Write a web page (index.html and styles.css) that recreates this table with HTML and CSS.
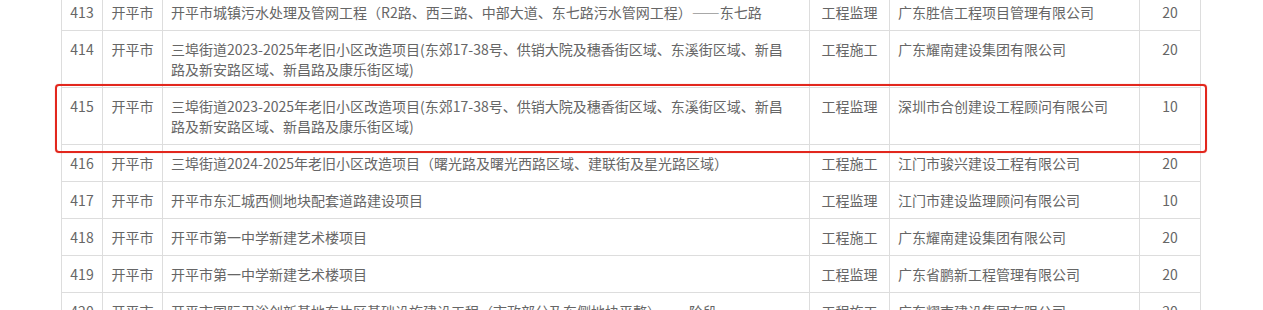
FILE: index.html
```html
<!DOCTYPE html>
<html lang="zh-CN">
<head>
<meta charset="utf-8">
<title>项目列表</title>
<link rel="stylesheet" href="styles.css">
</head>
<body>
<div class="wrap">
  <table class="list">
    <colgroup>
      <col class="c-no"><col class="c-area"><col class="c-name"><col class="c-type"><col class="c-corp"><col class="c-score">
    </colgroup>
    <tbody>
      <tr><td class="ctr">413</td><td class="ctr">开平市</td><td class="name">开平市城镇污水处理及管网工程（R2路、西三路、中部大道、东七路污水管网工程）——东七路</td><td class="ctr">工程监理</td><td>广东胜信工程项目管理有限公司</td><td class="ctr">20</td></tr>
      <tr><td class="ctr">414</td><td class="ctr">开平市</td><td class="name">三埠街道2023-2025年老旧小区改造项目(东郊17-38号、供销大院及穗香街区域、东溪街区域、新昌路及新安路区域、新昌路及康乐街区域)</td><td class="ctr">工程施工</td><td>广东耀南建设集团有限公司</td><td class="ctr">20</td></tr>
      <tr><td class="ctr">415</td><td class="ctr">开平市</td><td class="name">三埠街道2023-2025年老旧小区改造项目(东郊17-38号、供销大院及穗香街区域、东溪街区域、新昌路及新安路区域、新昌路及康乐街区域)</td><td class="ctr">工程监理</td><td>深圳市合创建设工程顾问有限公司</td><td class="ctr">10</td></tr>
      <tr><td class="ctr">416</td><td class="ctr">开平市</td><td class="name">三埠街道2024-2025年老旧小区改造项目（曙光路及曙光西路区域、建联街及星光路区域）</td><td class="ctr">工程施工</td><td>江门市骏兴建设工程有限公司</td><td class="ctr">20</td></tr>
      <tr><td class="ctr">417</td><td class="ctr">开平市</td><td class="name">开平市东汇城西侧地块配套道路建设项目</td><td class="ctr">工程监理</td><td>江门市建设监理顾问有限公司</td><td class="ctr">10</td></tr>
      <tr><td class="ctr">418</td><td class="ctr">开平市</td><td class="name">开平市第一中学新建艺术楼项目</td><td class="ctr">工程施工</td><td>广东耀南建设集团有限公司</td><td class="ctr">20</td></tr>
      <tr><td class="ctr">419</td><td class="ctr">开平市</td><td class="name">开平市第一中学新建艺术楼项目</td><td class="ctr">工程监理</td><td>广东省鹏新工程管理有限公司</td><td class="ctr">20</td></tr>
      <tr><td class="ctr">420</td><td class="ctr">开平市</td><td class="name">开平市国际卫浴创新基地东片区基础设施建设工程（市政部分及东侧地块平整）——阶段</td><td class="ctr">工程施工</td><td>广东耀南建设集团有限公司</td><td class="ctr">20</td></tr>
    </tbody>
  </table>
  <div class="highlight"></div>
</div>
</body>
</html>
```

FILE: styles.css
```css
html, body {
  margin: 0;
  padding: 0;
  background: #ffffff;
}

body {
  font-family: "Microsoft YaHei", "Noto Sans CJK SC", "Noto Sans", sans-serif;
  font-size: 14px;
  color: #666666;
  overflow: hidden;
}

.wrap {
  position: relative;
  width: 1139px;
  margin: -7px 0 0 61px;
}

.list {
  width: 1139px;
  table-layout: fixed;
  border-collapse: collapse;
  background: #ffffff;
}

.c-no { width: 41px; }
.c-area { width: 60px; }
.c-name { width: 647px; }
.c-type { width: 80px; }
.c-corp { width: 250px; }
.c-score { width: 61px; }

.list td {
  border: 1px solid #dddddd;
  padding: 8px 8px;
  line-height: 20px;
  vertical-align: top;
  text-align: left;
}

.list td.name {
  padding-right: 20px;
}

.list td.ctr {
  text-align: center;
  padding-left: 0;
  padding-right: 0;
}

.highlight {
  position: absolute;
  left: -6px;
  top: 91px;
  width: 1152px;
  height: 69px;
  box-sizing: border-box;
  border: 2px solid #e2271d;
  border-radius: 4px;
  box-shadow: 0 0 1px rgba(226, 39, 29, 0.6);
  pointer-events: none;
}
```
